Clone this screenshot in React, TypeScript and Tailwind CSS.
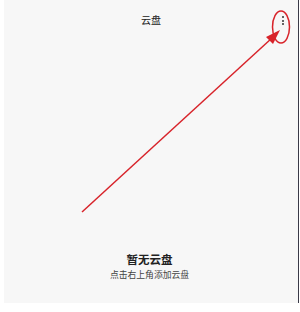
export default function App() {
  const font = { fontFamily: '"Noto Sans CJK SC", "Noto Sans", sans-serif' };
  return (
    <div className="w-[300px] h-[312px] bg-white overflow-hidden" style={font}>
      <div className="relative ml-[4px] w-[295px] h-[303px] bg-[#f7f7f7] border-r border-[#3a3a48] flex flex-col">
        <div className="relative pt-[14px] h-[30px] flex justify-center">
          <span className="text-[10px] leading-[12px] text-[#222]">云盘</span>
          <div className="absolute left-[278px] top-[16px] flex flex-col gap-[1.5px]">
            <span className="w-[2px] h-[2px] rounded-full bg-[#333]" />
            <span className="w-[2px] h-[2px] rounded-full bg-[#333]" />
            <span className="w-[2px] h-[2px] rounded-full bg-[#333]" />
          </div>
        </div>
        <div className="flex-1" />
        <div className="flex flex-col items-center pb-[22px] pr-[3px]">
          <span className="text-[11.5px] leading-[14px] font-bold text-[#222]">暂无云盘</span>
          <span className="mt-[3px] text-[8.8px] leading-[12px] text-[#444]">点击右上角添加云盘</span>
        </div>
        <svg className="absolute left-[-4px] top-0 pointer-events-none" width="300" height="312" viewBox="0 0 300 312">
          <ellipse cx="281" cy="27" rx="8.5" ry="16" fill="none" stroke="#d8232a" strokeWidth="1.5" />
          <line x1="82" y1="212" x2="272" y2="38" stroke="#d8232a" strokeWidth="1.5" />
          <polygon points="280,30 266,37 273,44" fill="#d8232a" />
        </svg>
      </div>
    </div>
  );
}
